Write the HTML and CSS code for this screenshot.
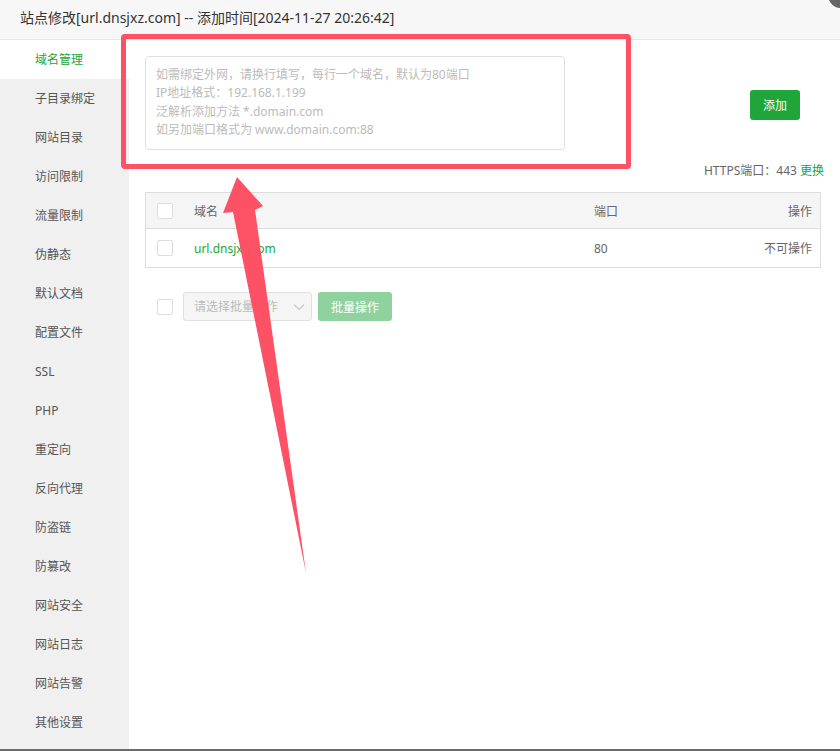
FILE: index.html
```html
<!DOCTYPE html>
<html lang="zh-CN">
<head>
<meta charset="utf-8">
<title>站点修改</title>
<link rel="stylesheet" href="styles.css">
</head>
<body>
<div class="modal">
  <div class="head">站点修改[url.dnsjxz.com] -- 添加时间[2024-11-27 20:26:42]</div>
  <span class="close"></span>
  <div class="body">
    <ul class="side">
      <li class="active">域名管理</li>
      <li>子目录绑定</li>
      <li>网站目录</li>
      <li>访问限制</li>
      <li>流量限制</li>
      <li>伪静态</li>
      <li>默认文档</li>
      <li>配置文件</li>
      <li>SSL</li>
      <li>PHP</li>
      <li>重定向</li>
      <li>反向代理</li>
      <li>防盗链</li>
      <li>防篡改</li>
      <li>网站安全</li>
      <li>网站日志</li>
      <li>网站告警</li>
      <li>其他设置</li>
    </ul>
    <div class="main">
      <div class="top-row">
        <textarea class="domains" placeholder="如需绑定外网，请换行填写，每行一个域名，默认为80端口&#10;IP地址格式：192.168.1.199&#10;泛解析添加方法 *.domain.com&#10;如另加端口格式为 www.domain.com:88"></textarea>
        <button class="btn-add">添加</button>
      </div>
      <div class="https">HTTPS端口：443 <a class="link">更换</a></div>
      <div class="table">
        <div class="tr th">
          <span class="cb"></span>
          <span class="c-name">域名</span>
          <span class="c-port">端口</span>
          <span class="c-op">操作</span>
        </div>
        <div class="tr td">
          <span class="cb"></span>
          <span class="c-name green">url.dnsjxz.com</span>
          <span class="c-port">80</span>
          <span class="c-op">不可操作</span>
        </div>
      </div>
      <div class="batch">
        <span class="cb"></span>
        <div class="select">请选择批量操作
          <svg class="chev" width="12" height="8" viewBox="0 0 12 8"><path d="M1 1.5 L6 6.5 L11 1.5" fill="none" stroke="#c8c8c8" stroke-width="1.2"/></svg>
        </div>
        <button class="btn-batch">批量操作</button>
      </div>
    </div>
  </div>
  <div class="highlight"></div>
  <svg class="arrow" width="840" height="751" viewBox="0 0 840 751">
    <polygon points="237,177 263,206 255,210 306,573 233,212 223,213" fill="#fd5166"/>
  </svg>
</div>
</body>
</html>
```

FILE: styles.css
```css
* { box-sizing: border-box; }
html, body { margin: 0; padding: 0; background: #fff; }
body {
  font-family: "Noto Sans", "Noto Sans CJK SC", sans-serif;
  font-size: 12px;
  color: #555;
}
.modal {
  position: relative;
  width: 840px;
  height: 751px;
  overflow: hidden;
  border-bottom: 2px solid #6b6b6b;
}
.head {
  height: 40px;
  background: #f7f7f7;
  border-bottom: 1px solid #e6e6e6;
  padding-left: 20px;
  line-height: 35px;
  font-size: 14px;
  color: #333;
}
.close {
  position: absolute;
  right: -14px;
  top: -18px;
  width: 26px;
  height: 26px;
  border-radius: 50%;
  background: #666;
}
.body {
  display: flex;
  height: 711px;
}
.side {
  list-style: none;
  margin: 0;
  padding: 0;
  width: 129px;
  background: #f0f0f0;
}
.side li {
  height: 39px;
  line-height: 39px;
  padding-left: 35px;
  color: #555;
}
.side li.active {
  background: #fff;
  color: #20a53a;
}
.main {
  flex: 1;
  padding: 16px 16px 0 16px;
}
.top-row {
  display: flex;
  justify-content: space-between;
  align-items: flex-start;
}
.domains {
  width: 420px;
  height: 94px;
  border: 1px solid #e0e0e0;
  border-radius: 4px;
  padding: 9px 10px;
  font-family: inherit;
  font-size: 12px;
  line-height: 18.3px;
  color: #555;
  resize: none;
  outline: none;
}
.domains::placeholder { color: #bbb; }
.btn-add {
  margin-top: 34px;
  margin-right: 24px;
  width: 50px;
  height: 30px;
  border: none;
  border-radius: 3px;
  background: #20a53a;
  color: #fff;
  font-family: inherit;
  font-size: 12px;
  padding: 0;
}
.https {
  margin-top: 11px;
  height: 20px;
  line-height: 20px;
  text-align: right;
  color: #666;
}
.link { color: #20a53a; }
.table {
  margin-top: 11px;
  margin-right: 3px;
  border: 1px solid #ddd;
}
.tr {
  display: flex;
  align-items: center;
  padding: 0 8px 0 11px;
  color: #666;
}
.th {
  height: 36px;
  background: #f5f5f5;
  border-bottom: 1px solid #ddd;
}
.td { height: 38px; }
.cb {
  width: 16px;
  height: 16px;
  border: 1px solid #ddd;
  border-radius: 2px;
  background: #fff;
  flex: none;
}
.c-name { margin-left: 21px; width: 400px; }
.c-port { flex: 1; }
.c-op { text-align: right; }
.green { color: #20a53a; }
.batch {
  margin-top: 24px;
  display: flex;
  align-items: center;
  padding-left: 12px;
}
.select {
  margin-left: 10px;
  width: 129px;
  height: 29px;
  border: 1px solid #e0e0e0;
  border-radius: 3px;
  background: #f5f5f5;
  color: #bbb;
  line-height: 27px;
  padding-left: 10px;
  display: flex;
  align-items: center;
  justify-content: space-between;
  padding-right: 6px;
}
.chev { flex: none; }
.btn-batch {
  margin-left: 6px;
  width: 74px;
  height: 29px;
  border: none;
  border-radius: 3px;
  background: #8fd29e;
  color: #fff;
  font-family: inherit;
  font-size: 12px;
  padding: 0;
}
.highlight {
  position: absolute;
  left: 121px;
  top: 34px;
  width: 510px;
  height: 135px;
  border: 5px solid #fd5166;
  border-radius: 4px;
  pointer-events: none;
}
.arrow {
  position: absolute;
  left: 0;
  top: 0;
  pointer-events: none;
}
```
